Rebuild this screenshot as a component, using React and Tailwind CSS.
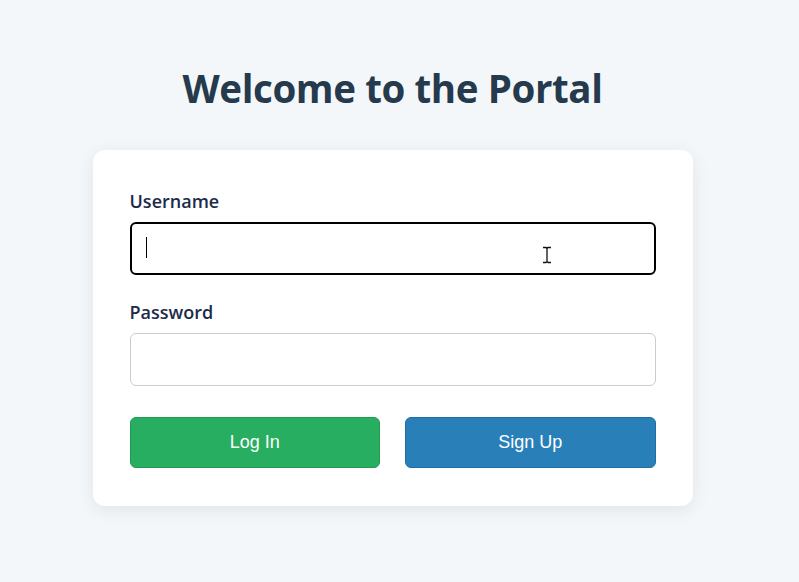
import React from 'react';

const uiFont = { fontFamily: '"Open Sans", "Noto Sans", sans-serif' };

export default function App() {
  return (
    <div className="min-h-[582px] w-full bg-[#f4f7f9] flex flex-col items-center pt-[61px] pr-[14px]" style={uiFont}>
      <h1 className="text-[38.5px] leading-[54px] font-bold text-[#263a4d] tracking-[-0.4px]">Welcome to the Portal</h1>

      <div className="mt-[35px] w-[600px] bg-white rounded-[12px] shadow-[0_4px_18px_rgba(0,0,0,0.08)] px-[37px] pt-[39px] pb-[38px]">
        {/* Username */}
        <label className="block text-[18px] leading-[24px] font-semibold text-[#1c2b4a] mb-[9px]">Username</label>
        <div className="relative">
          <input
            type="text"
            className="w-full h-[53px] rounded-[6px] border-2 border-black bg-white px-4 outline-none"
          />
          {/* text caret */}
          <span className="absolute left-[16px] top-[15px] w-px h-[21px] bg-black" />
          {/* mouse I-beam */}
          <svg className="absolute left-[411px] top-[24px]" width="12" height="18" viewBox="0 0 12 18">
            <path d="M2 1.5h3l1 1 1-1h3M6 2.5v13M2 16.5h3l1-1 1 1h3" fill="none" stroke="#fff" strokeWidth="3" />
            <path d="M2 1.5h3l1 1 1-1h3M6 2.5v13M2 16.5h3l1-1 1 1h3" fill="none" stroke="#111" strokeWidth="1.3" />
          </svg>
        </div>

        {/* Password */}
        <label className="block mt-[25px] text-[18px] leading-[24px] font-semibold text-[#1c2b4a] mb-[9px]">Password</label>
        <input
          type="password"
          className="w-full h-[53px] rounded-[6px] border border-[#cccccc] bg-white px-4 outline-none"
        />

        <div className="mt-[31px] grid grid-cols-2 gap-[25px]">
          <button
            className="h-[51px] rounded-[6px] bg-[#27ae60] border border-[#1f9a52] text-white text-[18px]"
            style={{ fontFamily: '"Liberation Sans", Arial, sans-serif' }}
          >
            Log In
          </button>
          <button
            className="h-[51px] rounded-[6px] bg-[#2980b9] border border-[#1f6da3] text-white text-[18px]"
            style={{ fontFamily: '"Liberation Sans", Arial, sans-serif' }}
          >
            Sign Up
          </button>
        </div>
      </div>
    </div>
  );
}
